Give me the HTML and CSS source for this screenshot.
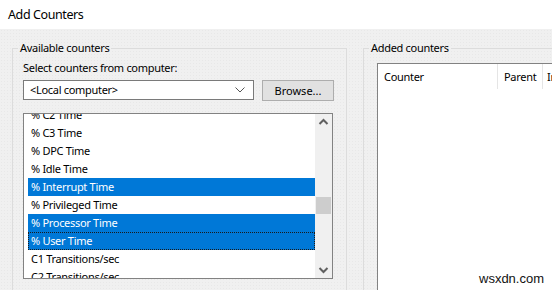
FILE: index.html
```html
<!DOCTYPE html>
<html lang="en">

<head>
    <meta charset="UTF-8">
    <meta name="viewport" content="width=device-width, initial-scale=1.0">
    <title>Add Counters</title>
    <link rel="stylesheet" href="styles.css">
</head>

<body>
    <div class="window">
        <div class="titlebar">Add Counters</div>
        <div class="client">
            <fieldset class="group group-left">
                <legend>Available counters</legend>
                <div class="field-label">Select counters from computer:</div>
                <div class="computer-row">
                    <div class="combo">
                        <span>&lt;Local computer&gt;</span>
                        <svg class="chevron" width="10" height="6" viewBox="0 0 10 6">
                            <polyline points="0.5,0.5 5,5 9.5,0.5" fill="none" stroke="#555" stroke-width="1" />
                        </svg>
                    </div>
                    <button class="browse">Browse...</button>
                </div>
                <div class="listbox">
                    <ul class="items">
                        <li>% C2 Time</li>
                        <li>% C3 Time</li>
                        <li>% DPC Time</li>
                        <li>% Idle Time</li>
                        <li class="selected">% Interrupt Time</li>
                        <li>% Privileged Time</li>
                        <li class="selected">% Processor Time</li>
                        <li class="selected focused">% User Time</li>
                        <li>C1 Transitions/sec</li>
                        <li>C2 Transitions/sec</li>
                    </ul>
                    <div class="scrollbar">
                        <svg class="arrow" width="17" height="17" viewBox="0 0 17 17">
                            <polyline points="4.5,10 8.5,6 12.5,10" fill="none" stroke="#606060" stroke-width="2" />
                        </svg>
                        <div class="track">
                            <div class="thumb"></div>
                        </div>
                        <svg class="arrow" width="17" height="17" viewBox="0 0 17 17">
                            <polyline points="4.5,7 8.5,11 12.5,7" fill="none" stroke="#606060" stroke-width="2" />
                        </svg>
                    </div>
                </div>
            </fieldset>

            <fieldset class="group group-right">
                <legend>Added counters</legend>
                <div class="added-list">
                    <div class="header">
                        <div class="col col-counter">Counter</div>
                        <div class="col col-parent">Parent</div>
                        <div class="col col-instance">Instance</div>
                    </div>
                </div>
            </fieldset>
        </div>
        <div class="watermark">wsxdn.com</div>
    </div>
</body>

</html>
```

FILE: styles.css
```css
html,
body {
    margin: 0;
    padding: 0;
}

body {
    font-family: "Noto Sans", "Open Sans", sans-serif;
    font-size: 11px;
    letter-spacing: -0.3px;
    color: #000;
    background: #f0f0f0;
}

.window {
    position: relative;
    width: 552px;
    height: 290px;
    overflow: hidden;
}

.titlebar {
    height: 29px;
    line-height: 30px;
    padding-left: 8px;
    background: #fff;
    font-size: 12.5px;
    letter-spacing: -0.4px;
}

.client {
    display: flex;
    gap: 16px;
    padding: 11px 0 0 12px;
    height: 250px;
    background-color: #f0f0f0;
    background-image: radial-gradient(#e8e8e8 0.6px, transparent 0.7px);
    background-size: 3px 3px;
}

.group {
    margin: 0;
    border: 1px solid #dcdcdc;
    padding: 0 0 0 10px;
    min-width: 0;
    flex-shrink: 0;
}

.group legend {
    margin-left: -5px;
    padding: 0 2px;
    line-height: 16px;
}

.group-left {
    width: 323px;
    height: 260px;
}

.group-right {
    width: 300px;
    height: 260px;
    padding-left: 13px;
}

.group-right legend {
    margin-left: -8px;
}

.field-label {
    margin-top: 4px;
    line-height: 16px;
}

.computer-row {
    display: flex;
    align-items: flex-start;
    gap: 8px;
    margin-top: 4px;
}

.combo {
    height: 18px;
    border: 1px solid #7a7a7a;
    background: #fff;
    display: flex;
    align-items: center;
    justify-content: space-between;
    padding: 0 0 0 6px;
    width: 223px;
}

.combo span {
    line-height: 18px;
}

.chevron {
    margin-right: 8px;
}

.browse {
    width: 72px;
    height: 21px;
    padding: 0;
    border: 1px solid #adadad;
    background: #e1e1e1;
    font-family: inherit;
    font-size: 11px;
    letter-spacing: 0;
    color: #000;
}

.listbox {
    display: flex;
    margin-top: 12px;
    width: 308px;
    height: 164px;
    border: 1px solid #828282;
    background: #fff;
    overflow: hidden;
}

.items {
    flex: 1;
    list-style: none;
    margin: -8px 0 0;
    padding: 0 0 0 4px;
}

.items li {
    height: 18px;
    line-height: 18px;
    padding-left: 3px;
    white-space: nowrap;
}

.items li.selected {
    background: #0078d7;
    color: #fff;
}

.items li.focused {
    outline: 1px dotted #1a1a1a;
    outline-offset: -1px;
}

.scrollbar {
    width: 17px;
    display: flex;
    flex-direction: column;
    background: #f0f0f0;
}

.arrow {
    display: block;
}

.track {
    flex: 1;
}

.thumb {
    margin: 66px 1px 0 1px;
    height: 17px;
    background: #cdcdcd;
}

.added-list {
    margin-top: 7px;
    width: 320px;
    height: 240px;
    border: 1px solid #828282;
    background: #fff;
}

.header {
    display: flex;
    height: 25px;
}

.col {
    line-height: 26px;
    padding-left: 6px;
    border-right: 1px solid #e5e5e5;
    white-space: nowrap;
    overflow: hidden;
}

.col-counter {
    width: 113px;
}

.col-parent {
    width: 38px;
}

.col-instance {
    width: 80px;
    border-right: none;
    padding-left: 4px;
}

.watermark {
    position: absolute;
    left: 479px;
    top: 271px;
    font-family: "Liberation Sans", Arial, sans-serif;
    font-size: 13px;
    letter-spacing: 0;
    color: #111;
}
```
